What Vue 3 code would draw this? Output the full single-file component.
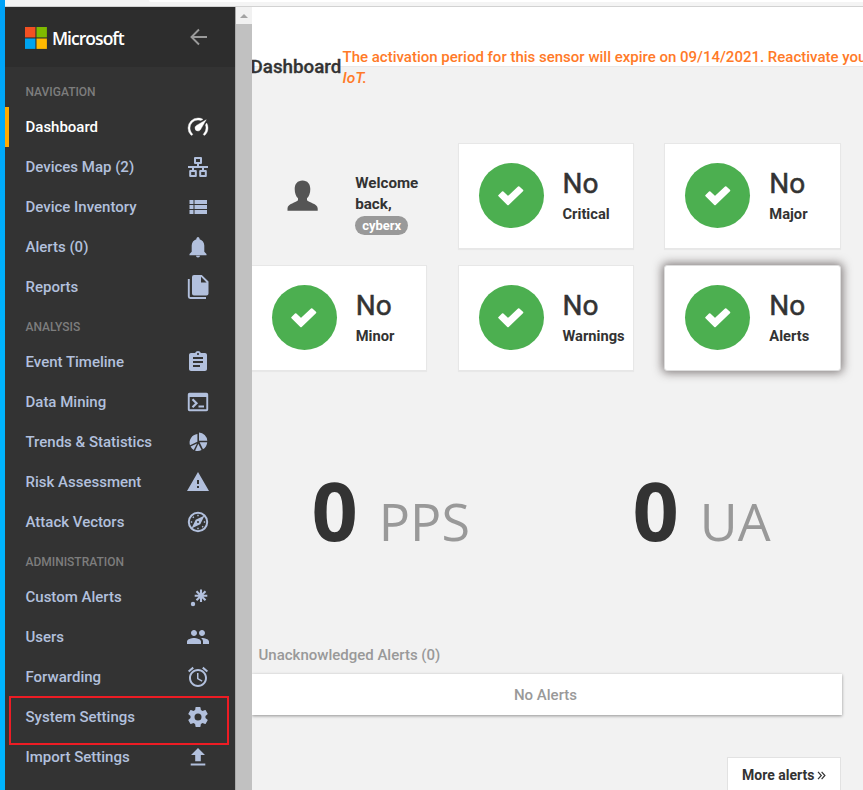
<script setup>
const icons = {
  gauge: '<path fill="currentColor" stroke="currentColor" stroke-width=".4" d="M12 16a3 3 0 0 1-3-3c0-1.120.61-2.100 1.500-2.610l9.710-5.620-5.530 9.580C14.170 15.330 13.150 16 12 16zM12 3c1.810 0 3.500.5 4.970 1.320l-2.100 1.210C14 5.190 13 5 12 5a8 8 0 0 0-8 8c0 2.210.89 4.210 2.340 5.650.4.4.4 1.020 0 1.410-.39.39-1.030.39-1.420.01A9.970 9.970 0 0 1 2 13 10 10 0 0 1 12 3zm10 10c0 2.760-1.120 5.260-2.930 7.070-.39.38-1.020.38-1.410-.01a1 1 0 0 1 0-1.410A7.950 7.950 0 0 0 20 13c0-1-.19-2-.54-2.880l1.210-2.100C21.500 9.500 22 11.180 22 13z"/>',
  network: '<path fill="none" stroke="currentColor" stroke-width="2" stroke-linejoin="round" d="M9 3h6v5H9zM12 8v4M2 12h20M7 12v4M17 12v4M4.200 16h5.600v5H4.200zM14.200 16h5.600v5h-5.600z"/>',
  list: '<path fill="currentColor" d="M3.500 5h4v4h-4zM8.500 5h12.500v4H8.500zM3.500 10h4v4h-4zM8.500 10h12.500v4H8.500zM3.500 15h4v4h-4zM8.500 15h12.500v4H8.500z"/>',
  bell: '<path fill="currentColor" d="M20.500 19v1.200h-17V19l2.200-2.200v-6.300c0-3 1.900-5.500 4.700-6.300 0-1.200.6-2.200 1.600-2.200s1.600 1 1.600 2.200c2.800.8 4.700 3.300 4.700 6.300v6.300zM14 20.800a2 1.700 0 0 1-4 0z"/>',
  files: '<path fill="currentColor" fill-rule="evenodd" d="M8 0h7.800l6.700 6.500v12a2 2 0 0 1-2 2H8a2 2 0 0 1-2-2V2a2 2 0 0 1 2-2zm7 1.800V7.500h5.600z"/><path fill="none" stroke="currentColor" stroke-width="1.900" d="M2.800 4v17.500a1.500 1.500 0 0 0 1.500 1.500H20"/>',
  clipboard: '<path fill="currentColor" d="M19 3h-4.180C14.400 1.840 13.300 1 12 1c-1.300 0-2.400.84-2.820 2H5c-1.100 0-2 .9-2 2v14c0 1.100.9 2 2 2h14c1.100 0 2-.9 2-2V5c0-1.100-.9-2-2-2zm-7 0c.55 0 1 .45 1 1s-.45 1-1 1-1-.45-1-1 .45-1 1-1zm2 14H7v-2h7v2zm3-4H7v-2h10v2zm0-4H7V7h10v2z"/>',
  console: '<path fill="currentColor" fill-rule="evenodd" d="M3.500 2.800h17a1.700 1.700 0 0 1 1.700 1.700v15a1.700 1.700 0 0 1-1.700 1.700h-17a1.700 1.700 0 0 1-1.700-1.700v-15a1.700 1.700 0 0 1 1.700-1.700zM3.700 7v12.300h16.600V7z"/><path fill="none" stroke="currentColor" stroke-width="2.200" d="m6.500 9.200 4 4-4 4M12.500 16.500h5.500"/>',
  pie: '<path fill="currentColor" d="M13 2.500a9 9 0 0 1 8.300 8.300H13zM11.400 4.100v7.600l-7.400 3.600A8.600 8.600 0 0 1 11.400 4.100zM4.600 16.600l6.400-3.200-3.300 6.700a9 9 0 0 1-3.100-3.500zM12.300 13.800l3.300 6.300a8.700 8.700 0 0 1-6.500.6zM13.600 12.300h7.600a8.600 8.600 0 0 1-4.200 7z"/>',
  warning: '<path fill="currentColor" d="M1 21h22L12 2 1 21zm12-3h-2v-2h2v2zm0-4h-2v-4h2v4z"/>',
  compass: '<circle cx="12" cy="12" r="9.200" fill="none" stroke="currentColor" stroke-width="2"/><path fill="currentColor" fill-rule="evenodd" d="M18.600 5.400 14.300 14.300l-8.900 4.300L9.700 9.700zM12 11a1 1 0 1 0 0 2 1 1 0 0 0 0-2z"/><path stroke="currentColor" stroke-width="1.400" d="M12 4.800v1.400M12 17.800v1.400M4.800 12h1.400M17.800 12h1.400M6.800 6.800l1 1M16.200 16.200l1 1"/>',
  spark: '<path fill="none" stroke="currentColor" stroke-width="2.100" d="M15 4.500v12.600M8.700 10.800h12.600M10.500 6.300l9 9M19.500 6.300l-9 9"/><circle cx="7" cy="19" r="2.200" fill="currentColor"/>',
  users: '<path fill="currentColor" d="M16 11c1.660 0 2.990-1.340 2.990-3S17.660 5 16 5c-1.660 0-3 1.340-3 3s1.340 3 3 3zm-8 0c1.660 0 2.990-1.340 2.990-3S9.660 5 8 5C6.340 5 5 6.340 5 8s1.340 3 3 3zm0 2c-2.330 0-7 1.170-7 3.500V19h14v-2.500c0-2.330-4.670-3.500-7-3.500zm8 0c-.29 0-.62.02-.97.05 1.160.84 1.970 1.970 1.970 3.450V19h6v-2.500c0-2.330-4.670-3.500-7-3.500z"/>',
  alarm: '<path fill="currentColor" d="M22 5.720l-4.600-3.860-1.290 1.530 4.600 3.860L22 5.720zM7.880 3.390L6.600 1.860 2 5.710l1.290 1.530 4.590-3.850zM12.500 8H11v6l4.750 2.850.75-1.230-4-2.370V8zM12 4c-4.970 0-9 4.030-9 9s4.020 9 9 9c4.970 0 9-4.030 9-9s-4.030-9-9-9zm0 16c-3.870 0-7-3.130-7-7s3.130-7 7-7 7 3.130 7 7-3.130 7-7 7z"/>',
  gear: '<path fill="currentColor" d="M12 15.500A3.500 3.500 0 0 1 8.500 12 3.500 3.500 0 0 1 12 8.500a3.500 3.500 0 0 1 3.500 3.500 3.500 3.500 0 0 1-3.500 3.500m7.430-2.530c.04-.32.07-.64.07-.97s-.03-.66-.07-1l2.110-1.630c.19-.15.24-.42.12-.64l-2-3.460c-.12-.22-.39-.31-.61-.22l-2.490 1c-.52-.39-1.060-.73-1.690-.98l-.37-2.650A.506.506 0 0 0 14 2h-4c-.25 0-.46.18-.5.42l-.37 2.650c-.63.25-1.170.59-1.690.98l-2.490-1c-.22-.09-.49 0-.61.22l-2 3.460c-.13.22-.07.49.12.64L4.570 11c-.04.34-.07.67-.07 1s.03.65.07.97l-2.110 1.660c-.19.15-.25.42-.12.64l2 3.460c.12.22.39.3.61.22l2.490-1.010c.52.4 1.060.74 1.690.99l.37 2.650c.04.24.25.42.5.42h4c.25 0 .46-.18.5-.42l.37-2.650c.63-.26 1.170-.59 1.690-.99l2.490 1.010c.22.08.49 0 .61-.22l2-3.460c.12-.22.07-.49-.12-.64z"/>',
  upload: '<path fill="currentColor" d="M9.200 16.200h5.600v-6.200h4.200l-7-7-7 7h4.200zM4.700 18.600h14.600v1.900H4.700z"/>',
}

const sections = [
  { title: 'NAVIGATION', items: [
    { label: 'Dashboard', icon: 'gauge', active: true },
    { label: 'Devices Map (2)', icon: 'network' },
    { label: 'Device Inventory', icon: 'list' },
    { label: 'Alerts (0)', icon: 'bell' },
    { label: 'Reports', icon: 'files' },
  ] },
  { title: 'ANALYSIS', items: [
    { label: 'Event Timeline', icon: 'clipboard' },
    { label: 'Data Mining', icon: 'console' },
    { label: 'Trends & Statistics', icon: 'pie' },
    { label: 'Risk Assessment', icon: 'warning' },
    { label: 'Attack Vectors', icon: 'compass' },
  ] },
  { title: 'ADMINISTRATION', items: [
    { label: 'Custom Alerts', icon: 'spark' },
    { label: 'Users', icon: 'users' },
    { label: 'Forwarding', icon: 'alarm' },
    { label: 'System Settings', icon: 'gear', marked: true },
    { label: 'Import Settings', icon: 'upload' },
  ] },
]

const cards = [
  { label: 'Critical' },
  { label: 'Major' },
  { label: 'Minor' },
  { label: 'Warnings' },
  { label: 'Alerts', raised: true },
]
const stats = [{ value: 0, unit: 'PPS' }, { value: 0, unit: 'UA' }]
</script>

<template>
  <div class="screen">
    <div class="edge"></div>
    <div class="window">
      <div class="chrome"><div class="address"></div></div>
      <div class="body">
        <aside class="sidebar">
          <div class="brand">
            <svg class="logo" width="22" height="22" viewBox="0 0 22 22">
              <path fill="#f25022" d="M0 0h10.400v10.400H0z" /><path fill="#7fba00" d="M11.500 0h10.400v10.400H11.500z" />
              <path fill="#00a4ef" d="M0 11.500h10.400v10.400H0z" /><path fill="#ffb900" d="M11.500 11.500h10.400v10.400H11.500z" />
            </svg>
            <span class="brand-name">Microsoft</span>
            <svg class="back" width="18" height="18" viewBox="0 0 18 18">
              <path d="M17 9H2M9 1.500 1.500 9 9 16.500" fill="none" stroke="#9a9a9a" stroke-width="1.900" />
            </svg>
          </div>
          <nav>
            <section v-for="s in sections" :key="s.title">
              <h2 class="group">{{ s.title }}</h2>
              <a v-for="i in s.items" :key="i.label" class="item" :class="{ active: i.active, marked: i.marked }">
                <span>{{ i.label }}</span>
                <svg width="24" height="24" viewBox="0 0 24 24" v-html="icons[i.icon]"></svg>
              </a>
            </section>
          </nav>
        </aside>
        <div class="scrollbar">
          <div class="scroll-up"><i></i></div>
          <div class="thumb"></div>
        </div>
        <main class="main">
          <header class="top">
            <h1>Dashboard</h1>
            <p>The activation period for this sensor will expire on 09/14/2021. Reactivate you<br /><em>IoT.</em></p>
          </header>
          <div class="cards">
            <div class="welcome">
              <svg width="32" height="32" viewBox="0 0 32 32">
                <path fill="#555" d="M15.500.5c5 0 7.800 3.500 7.800 8.500 0 4-1.300 7.500-3.300 9.300v2c1.500 2.200 10.700 3.500 10.700 8.200v2.300H.5v-2.300c0-4.700 9-6 10.500-8.200v-2C9 16.500 7.700 13 7.700 9c0-5 2.800-8.500 7.800-8.500z" />
              </svg>
              <div class="greeting">Welcome<br />back,<br /><span class="badge">cyberx</span></div>
            </div>
            <div v-for="c in cards" :key="c.label" class="card" :class="{ raised: c.raised }">
              <div class="circle">
                <svg width="28" height="22" viewBox="0 0 28 22">
                  <path fill="#fff" stroke="#fff" stroke-width="2" stroke-linejoin="round" d="M2.200 10.600 5.700 7.200 11 12.300 21.700 2.200 25.300 5.600 11 19.200z" />
                </svg>
              </div>
              <div class="info"><strong>No</strong><span>{{ c.label }}</span></div>
            </div>
          </div>
          <div class="stats">
            <div v-for="s in stats" :key="s.unit" class="stat"><b>{{ s.value }}</b><span>{{ s.unit }}</span></div>
          </div>
          <h3 class="caption">Unacknowledged Alerts (0)</h3>
          <div class="empty">No Alerts</div>
          <div class="footer">
            <a class="more">More alerts
              <svg width="9" height="9" viewBox="0 0 9 9"><path d="M1 .8 4.300 4.500 1 8.200M4.600.8 7.900 4.500 4.600 8.200" fill="none" stroke="#333" stroke-width="1.200" /></svg>
            </a>
          </div>
        </main>
      </div>
    </div>
  </div>
</template>

<style>
body { margin: 0; overflow: hidden; }
</style>

<style scoped>
* { box-sizing: border-box; }
.screen { display: flex; width: 863px; height: 790px; overflow: hidden; font-family: Roboto, "Liberation Sans", sans-serif; font-weight: 500; color: #333; }
.edge { width: 5px; flex: none; background: linear-gradient(#00a2f8, #00b4ff 45%); }
.window { flex: 1; min-width: 0; display: flex; flex-direction: column; }
.chrome { height: 7px; flex: none; background: #f4f4f4; border-bottom: 1px solid #d2d2d2; padding-left: 144px; }
.address { height: 2px; background: #fff; border-radius: 0 0 0 3px; }
.body { flex: 1; min-height: 0; display: flex; }
.sidebar { width: 231px; flex: none; background: #333; border-right: 1px solid #aaa; }
.brand { height: 60px; background: #2d2d2d; display: flex; align-items: center; padding: 2px 27px 0 20.400px; }
.brand-name { font: 600 17.500px/24px "Open Sans", sans-serif; letter-spacing: -0.95px; color: #fff; margin-left: 4.500px; flex: 1; }
.back { margin-top: -2px; }
.group { margin: 0; height: 35px; padding: 5px 0 0 20.500px; font-size: 12px; line-height: 30px; font-weight: 500; color: #7d7d7d; }
section:first-child .group { height: 40px; padding-top: 10px; }
.item { height: 40px; display: flex; align-items: center; justify-content: space-between; padding: 0 25px 0 20.500px; font-size: 15px; color: #b2c0dd; position: relative; }
.item svg { overflow: visible; }
.item.active { color: #fff; padding-left: 16.500px; border-left: 4px solid #ffaa00; }
.marked::after { content: ""; box-sizing: border-box; position: absolute; left: 4px; top: -1px; width: 220px; height: 49px; border: 2px solid #ed1c24; z-index: 1; }
.scrollbar { width: 15.500px; flex: none; display: flex; flex-direction: column; background: #f1f1f1; }
.scroll-up { height: 17px; display: flex; align-items: center; justify-content: center; }
.scroll-up i { border: 4px solid transparent; border-top: 0; border-bottom-color: #a3a3a3; }
.thumb { flex: 1; background: #c1c1c1; }
.main { flex: 1; min-width: 0; background: #f2f2f2; overflow: hidden; }
.top { height: 60px; background: #fff; border-bottom: 1px solid #e8e8e8; padding-top: 39px; display: flex; align-items: flex-start; white-space: nowrap; }
.top h1 { margin: 0 0 0 -1px; font-size: 18.800px; line-height: 43px; font-weight: 500; -webkit-text-stroke: .3px #333; width: 92px; flex: none; }
.top p { margin: 0; font-size: 15px; line-height: 21px; padding-top: .5px; color: #ff7a28; }
.top em { font-size: 15.500px; }
.cards { margin-top: 75.500px; display: grid; grid-template-columns: repeat(3, 176.500px); grid-auto-rows: 106px; gap: 16px 30.300px; margin-left: -.8px; }
.card { background: #fff; border: 1px solid #e7e7e7; box-shadow: 0 1px 1px rgba(0, 0, 0, .04); display: flex; padding: 19.500px 0 0 20px; }
.card.raised { border-radius: 3px; border-color: #ddd; box-shadow: 0 0 10px 2px rgba(60, 50, 50, .6); }
.circle { width: 65px; height: 65px; border-radius: 50%; background: #4caf50; display: flex; align-items: center; justify-content: center; flex: none; }
.info { margin-left: 19px; padding-top: 1px; display: flex; flex-direction: column; }
.info strong { font-size: 28px; line-height: 40px; font-weight: 400; -webkit-text-stroke: .5px #333; }
.info span { font-size: 14.700px; line-height: 20px; font-weight: 700; }
.welcome { display: flex; padding: 37px 0 0 36.500px; }
.greeting { margin: -7px 0 0 36px; font-size: 15.200px; line-height: 21px; font-weight: 700; }
.badge { display: inline-block; height: 19px; line-height: 19px; padding: 0 7px; border-radius: 10px; background: #999; color: #fff; font-size: 13px; }
.stats { margin-top: 84.500px; height: 110px; display: grid; grid-template-columns: 321px 1fr; padding-left: 60px; font-family: "Open Sans", sans-serif; line-height: 110px; }
.stat { display: flex; align-items: baseline; }
.stat b { font-size: 81px; font-weight: 700; }
.stat span { font-size: 52px; font-weight: 400; color: #999; margin-left: 21px; }
.caption { margin: 78px 0 0 7px; font-size: 15px; line-height: 24px; font-weight: 500; color: #999; }
.empty { margin-top: 7px; width: 590px; height: 41px; background: #fff; box-shadow: 0 1px 3px rgba(0, 0, 0, .4); text-align: center; font-size: 15px; line-height: 42px; color: #999; padding-right: 2px; }
.footer { margin-top: 42px; width: 589.500px; display: flex; justify-content: flex-end; }
.more { width: 114px; height: 40px; background: #fff; border: 1px solid #e2e2e2; padding-left: 14px; line-height: 35px; font-size: 14px; font-weight: 700; white-space: nowrap; }
.more svg { margin-left: -1px; }
</style>
